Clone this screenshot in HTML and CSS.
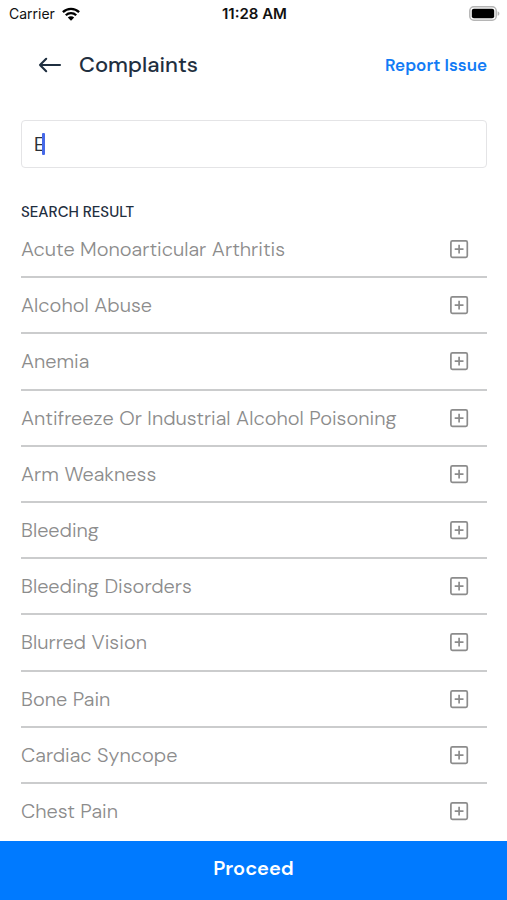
FILE: index.html
```html
<!DOCTYPE html>
<html lang="en">
<head>
<meta charset="utf-8">
<meta name="viewport" content="width=device-width, initial-scale=1">
<title>Complaints</title>
<link rel="stylesheet" href="styles.css">
</head>
<body>
<svg class="symbols" aria-hidden="true">
  <symbol id="add" viewBox="0 0 20 20">
    <rect x="1.9" y="1.9" width="16.4" height="16.4" rx="1.5" fill="none" stroke="currentColor" stroke-width="1.7"/>
    <path d="M10.1 5.7v8.8M5.7 10.1h8.8" fill="none" stroke="currentColor" stroke-width="1.7"/>
  </symbol>
</svg>
<div class="status">
  <div class="carrier">
    <span>Carrier</span>
    <svg class="wifi" viewBox="0 0 18 14" aria-hidden="true">
      <g fill="none" stroke="#000" stroke-width="2.3">
        <path d="M.9 5.1a11.6 11.6 0 0 1 16.2 0"/>
        <path d="M3.8 8.2a7.4 7.4 0 0 1 10.4 0"/>
      </g>
      <path d="M9 13.7 5.8 10.5a4.6 4.6 0 0 1 6.4 0z"/>
    </svg>
  </div>
  <div class="time">11:28 AM</div>
  <svg class="battery" viewBox="0 0 31 15" aria-hidden="true">
    <rect x=".8" y=".8" width="26.4" height="13.4" rx="4" fill="#fff" stroke="#b5b5b5" stroke-width="1.5"/>
    <rect x="2.8" y="2.8" width="22.4" height="9.4" rx="2"/>
    <path d="M28.6 5.2c2.4.8 2.4 3.8 0 4.6z" fill="#b5b5b5"/>
  </svg>
</div>
<header class="header">
  <button class="back" aria-label="Back">
    <svg viewBox="0 0 24 16" aria-hidden="true"><path d="M22 8H2M8.2 1.8 2 8l6.2 6.2" fill="none" stroke="currentColor" stroke-width="2.1" stroke-linecap="round" stroke-linejoin="round"/></svg>
  </button>
  <h1>Complaints</h1>
  <a class="report" href="#report">Report Issue</a>
</header>
<main class="main">
  <div class="search">
    <input type="text" value="E" aria-label="Search complaints">
    <span class="caret"></span>
  </div>
  <h2>SEARCH RESULT</h2>
  <ul class="results">
    <li><span>Acute Monoarticular Arthritis</span><button aria-label="Add Acute Monoarticular Arthritis"><svg><use href="#add"/></svg></button></li>
    <li><span>Alcohol Abuse</span><button aria-label="Add Alcohol Abuse"><svg><use href="#add"/></svg></button></li>
    <li><span>Anemia</span><button aria-label="Add Anemia"><svg><use href="#add"/></svg></button></li>
    <li><span>Antifreeze Or Industrial Alcohol Poisoning</span><button aria-label="Add Antifreeze Or Industrial Alcohol Poisoning"><svg><use href="#add"/></svg></button></li>
    <li><span>Arm Weakness</span><button aria-label="Add Arm Weakness"><svg><use href="#add"/></svg></button></li>
    <li><span>Bleeding</span><button aria-label="Add Bleeding"><svg><use href="#add"/></svg></button></li>
    <li><span>Bleeding Disorders</span><button aria-label="Add Bleeding Disorders"><svg><use href="#add"/></svg></button></li>
    <li><span>Blurred Vision</span><button aria-label="Add Blurred Vision"><svg><use href="#add"/></svg></button></li>
    <li><span>Bone Pain</span><button aria-label="Add Bone Pain"><svg><use href="#add"/></svg></button></li>
    <li><span>Cardiac Syncope</span><button aria-label="Add Cardiac Syncope"><svg><use href="#add"/></svg></button></li>
    <li><span>Chest Pain</span><button aria-label="Add Chest Pain"><svg><use href="#add"/></svg></button></li>
  </ul>
</main>
<button class="proceed">Proceed</button>
</body>
</html>
```
FILE: styles.css
```css
* {
  box-sizing: border-box;
}

body {
  margin: 0;
  min-height: 100vh;
  display: flex;
  flex-direction: column;
  background: #fff;
  color: #1f2f40;
  font-family: "DM Sans", Inter, sans-serif;
}

button {
  border: 0;
  padding: 0;
  background: none;
  color: inherit;
  font: inherit;
  cursor: pointer;
}

svg {
  display: block;
}

.symbols {
  position: absolute;
  width: 0;
  height: 0;
}

.status {
  display: grid;
  grid-template-columns: 1fr auto 1fr;
  align-items: center;
  height: 27px;
  padding: 0 7px 0 9px;
  color: #111;
  font-family: Inter, sans-serif;
  font-size: 14px;
}

.carrier {
  display: flex;
  align-items: center;
  gap: 7px;
}

.wifi {
  width: 18px;
  height: 14px;
}

.time {
  font-size: 15px;
  font-weight: 600;
}

.battery {
  width: 31px;
  height: 15px;
  justify-self: end;
}

.header {
  display: flex;
  align-items: center;
  height: 75px;
  padding: 0 20px 0 38px;
}

.back svg {
  width: 24px;
  height: 16px;
}

h1 {
  flex: 1;
  margin: 0 0 0 17px;
  font-size: 22px;
  font-weight: 500;
}

.report {
  color: #127bf5;
  font-size: 17px;
  font-weight: 600;
  text-decoration: none;
}

.main {
  flex: 1;
  display: flex;
  flex-direction: column;
  padding: 18px 20px 0 21px;
}

.search {
  position: relative;
}

.search input {
  display: block;
  width: 100%;
  height: 48px;
  padding: 0 12px;
  border: 1px solid #e4e4e6;
  border-radius: 4px;
  outline: 0;
  color: #2b3036;
  font: inherit;
  font-size: 19px;
}

.caret {
  position: absolute;
  left: 21px;
  top: 13px;
  width: 3px;
  height: 22px;
  border-radius: 1px;
  background: #4669e8;
}

h2 {
  margin: 34px 0 0;
  font-size: 15px;
  line-height: 20px;
  font-weight: 500;
}

.results {
  flex: 1;
  display: flex;
  flex-direction: column;
  margin: 0 0 1px;
  padding: 0;
  list-style: none;
  color: #8c8c8c;
  font-size: 20px;
  font-weight: 300;
}

.results li {
  flex: 1;
  display: flex;
  align-items: center;
  justify-content: space-between;
  min-height: 56px;
  padding-right: 18px;
  border-bottom: 2px solid #cbcccd;
}

.results li:last-child {
  border-color: transparent;
}

.results svg {
  width: 20px;
  height: 20px;
}

.proceed {
  height: 59px;
  padding-bottom: 6px;
  background: #007aff;
  color: #fff;
  font-size: 20px;
  font-weight: 600;
}
```
